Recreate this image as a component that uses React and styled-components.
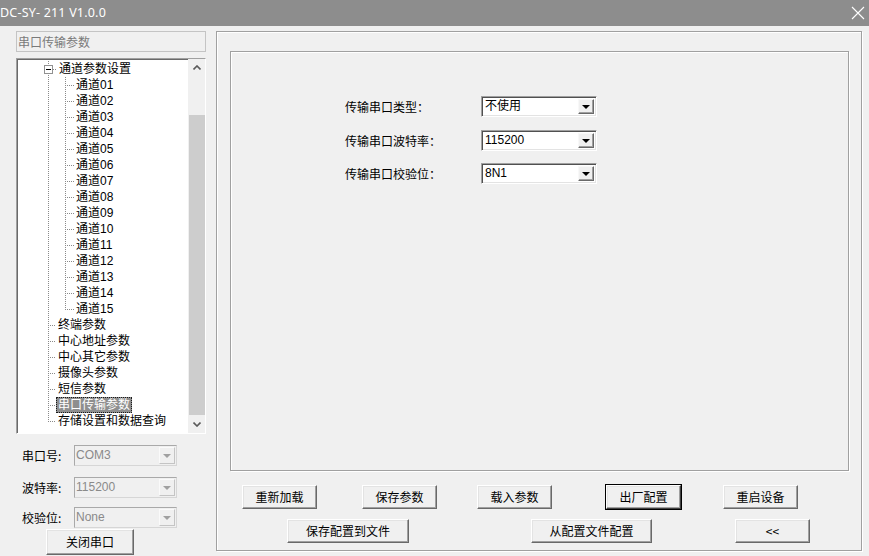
import React from "react";
import styled, { createGlobalStyle, css } from "styled-components";

const GlobalStyle = createGlobalStyle`
  html, body {
    margin: 0;
    padding: 0;
    background: #f0f0f0;
  }
  body {
    font-family: "Liberation Sans", "Noto Sans CJK SC", sans-serif;
    font-size: 12px;
    color: #000;
  }
  * {
    box-sizing: border-box;
  }
`;

const DOT = "#8a8a8a";

const Window = styled.div`
  width: 869px;
  height: 556px;
  display: flex;
  flex-direction: column;
  overflow: hidden;
  background: #f0f0f0;
`;
const TitleBar = styled.div`
  height: 26px;
  flex: none;
  display: flex;
  align-items: center;
  justify-content: space-between;
  padding: 0 4px 1px 0;
  background: #8d8d8d;
  color: #fff;
  font-family: "Noto Sans", sans-serif;
  font-size: 12.5px;
  letter-spacing: 0.2px;
`;
const Body = styled.div`
  flex: 1;
  display: flex;
  min-height: 0;
`;
const LeftPane = styled.div`
  width: 216px;
  flex: none;
  display: flex;
  flex-direction: column;
  padding: 5px 0 0 16px;
`;
const PathField = styled.div`
  width: 190px;
  height: 21px;
  border: 1px solid #c4c4c4;
  background: #f0f0f0;
  color: #7a7a7a;
  padding-left: 1px;
  line-height: 19px;
  font-family: "Noto Sans CJK SC", sans-serif;
`;
const Tree = styled.div`
  margin-top: 6px;
  width: 190px;
  height: 376px;
  display: flex;
  background: #fff;
  border: 1px solid #fff;
  border-top-color: #a0a0a0;
  border-left-color: #a0a0a0;
  box-shadow: inset 1px 1px 0 #6a6a6a;
`;
const TreeList = styled.div`
  flex: 1;
  padding-top: 2px;
  overflow: hidden;
`;
const TreeRow = styled.div`
  height: 16px;
  display: flex;
  align-items: stretch;
`;
const Spacer = styled.div`
  width: ${(p) => p.$w}px;
  flex: none;
`;
const Guide = styled.div`
  width: ${(p) => p.$w}px;
  flex: none;
  display: flex;
  align-items: center;
  background-repeat: no-repeat;
  ${(p) => {
    const layers = [];
    const sizes = [];
    const pos = [];
    if (p.$vert) {
      layers.push(`repeating-linear-gradient(to bottom, ${DOT} 0 1px, transparent 1px 2px)`);
      sizes.push(`1px ${p.$vert === "half" ? "50%" : "100%"}`);
      pos.push(`${p.$vx || 0}px 0`);
    }
    if (p.$horiz) {
      layers.push(`repeating-linear-gradient(to right, ${DOT} 0 1px, transparent 1px 2px)`);
      sizes.push(`${p.$horiz}px 1px`);
      pos.push(`${p.$hx || 0}px 8px`);
    }
    return layers.length
      ? css`
          background-image: ${layers.join(", ")};
          background-size: ${sizes.join(", ")};
          background-position: ${pos.join(", ")};
        `
      : "";
  }}
`;
const ExpandBox = styled.div`
  width: 9px;
  height: 9px;
  border: 1px solid #919191;
  background: #fff;
  display: flex;
  align-items: center;
  justify-content: center;
  &::after {
    content: "";
    width: 5px;
    height: 1px;
    background: #000;
  }
`;
const ItemLabel = styled.span`
  height: 16px;
  line-height: 14px;
  padding: 0 1px;
  border: 1px solid transparent;
  white-space: nowrap;
  font-family: "Liberation Sans", "Noto Sans CJK SC", sans-serif;
  ${(p) =>
    p.$selected &&
    css`
      background: #8e8e8e;
      color: #fff;
      border: 1px dotted #1a1a1a;
    `}
`;
const ScrollBar = styled.div`
  width: 17px;
  flex: none;
  display: flex;
  flex-direction: column;
  background: #f0f0f0;
`;
const ScrollArrow = styled.div`
  height: 17px;
  display: flex;
  align-items: center;
  justify-content: center;
`;
const ScrollTrack = styled.div`
  flex: 1;
  display: flex;
  flex-direction: column;
  padding: 39px 0 1px 1px;
`;
const ScrollThumb = styled.div`
  flex: 1;
  background: #cdcdcd;
`;
const ComboRow = styled.div`
  display: flex;
  align-items: center;
  margin-top: ${(p) => p.$mt}px;
  padding-left: ${(p) => p.$pl || 0}px;
`;
const FieldLabel = styled.div`
  width: ${(p) => p.$w}px;
  flex: none;
  font-family: "Noto Sans CJK SC", sans-serif;
  white-space: nowrap;
`;
const Combo = styled.div`
  width: ${(p) => p.$w}px;
  height: 21px;
  display: flex;
  align-items: stretch;
  border: 1px solid;
  ${(p) =>
    p.$disabled
      ? css`
          border-color: #a9a9a9 #d6d6d6 #d6d6d6 #a9a9a9;
          background: #f0f0f0;
          color: #8a8a8a;
        `
      : css`
          border-color: #a0a0a0 #fff #fff #a0a0a0;
          box-shadow: inset 1px 1px 0 #505050, inset -1px -1px 0 #e3e3e3;
          background: #fff;
          color: #000;
        `}
`;
const ComboText = styled.div`
  flex: 1;
  padding-left: ${(p) => (p.$disabled ? 1 : 3)}px;
  line-height: 19px;
  font-family: "Liberation Sans", "Noto Sans CJK SC", sans-serif;
  overflow: hidden;
  white-space: nowrap;
`;
const ComboButton = styled.div`
  width: 16px;
  margin: ${(p) => (p.$disabled ? "1px" : "2px 2px 2px 0")};
  display: flex;
  align-items: center;
  justify-content: center;
  border: 1px solid;
  ${(p) =>
    p.$disabled
      ? css`
          border-color: #fafafa #c4c4c4 #c4c4c4 #fafafa;
          background: #f0f0f0;
        `
      : css`
          border-color: #f8f8f8 #696969 #696969 #f8f8f8;
          box-shadow: inset -1px -1px 0 #a0a0a0;
          background: #f0f0f0;
        `}
  &::after {
    content: "";
    border-left: 4px solid transparent;
    border-right: 4px solid transparent;
    border-top: 4px solid ${(p) => (p.$disabled ? "#a0a0a0" : "#000")};
    margin-top: 1px;
  }
`;
const Button = styled.div`
  width: ${(p) => p.$w}px;
  height: ${(p) => p.$h || 24}px;
  margin-left: ${(p) => p.$ml || 0}px;
  flex: none;
  display: flex;
  align-items: center;
  justify-content: center;
  background: #f0f0f0;
  border: 1px solid;
  border-color: #fff #696969 #696969 #fff;
  box-shadow: inset -1px -1px 0 #a0a0a0, inset 1px 1px 0 #e3e3e3;
  font-family: "Noto Sans CJK SC", sans-serif;
  font-size: 12px;
  white-space: nowrap;
  padding-bottom: 1px;
  ${(p) =>
    p.$default &&
    css`
      outline: 1px solid #000;
      outline-offset: 0;
      border-color: #fff #404040 #404040 #fff;
    `}
`;
const RightPane = styled.div`
  flex: 1;
  padding: 5px 7px 0 0;
`;
const GroupBox = styled.div`
  height: 520px;
  display: flex;
  flex-direction: column;
  padding: 19px 12px 0 13px;
  border: 1px solid #a0a0a0;
  box-shadow: inset 1px 1px 0 #fff, 1px 1px 0 #fff;
`;
const InnerBox = styled.div`
  height: 420px;
  flex: none;
  border: 1px solid #a0a0a0;
  box-shadow: inset 1px 1px 0 #fff, 1px 1px 0 #fff;
  padding: 44px 0 0 114px;
`;
const ButtonRow = styled.div`
  display: flex;
  margin-top: ${(p) => p.$mt}px;
`;

const channels = Array.from({ length: 15 }, (_, i) => `通道${String(i + 1).padStart(2, "0")}`);
const topItems = ["终端参数", "中心地址参数", "中心其它参数", "摄像头参数", "短信参数", "串口传输参数", "存储设置和数据查询"];

const Chevron = ({ down }) => (
  <svg width="8" height="5" viewBox="0 0 8 5">
    <path d={down ? "M0.5 0.5 L4 4 L7.5 0.5" : "M0.5 4.5 L4 1 L7.5 4.5"} fill="none" stroke="#5a5a5a" strokeWidth="1.6" />
  </svg>
);

const TreeView = () => (
  <Tree>
    <TreeList>
      <TreeRow>
        <Spacer $w={27} />
        <Guide $w={13} $vert="full" $vx={4} $horiz={4} $hx={9}>
          <ExpandBox />
        </Guide>
        <ItemLabel>通道参数设置</ItemLabel>
      </TreeRow>
      {channels.map((c, i) => (
        <TreeRow key={c}>
          <Spacer $w={31} />
          <Guide $w={17} $vert="full" />
          <Guide $w={9} $vert={i === channels.length - 1 ? "half" : "full"} $horiz={9} />
          <ItemLabel>{c}</ItemLabel>
        </TreeRow>
      ))}
      {topItems.map((t, i) => (
        <TreeRow key={t}>
          <Spacer $w={31} />
          <Guide $w={8} $vert={i === topItems.length - 1 ? "half" : "full"} $horiz={8} />
          <ItemLabel $selected={t === "串口传输参数"}>{t}</ItemLabel>
        </TreeRow>
      ))}
    </TreeList>
    <ScrollBar>
      <ScrollArrow>
        <Chevron />
      </ScrollArrow>
      <ScrollTrack>
        <ScrollThumb />
      </ScrollTrack>
      <ScrollArrow>
        <Chevron down />
      </ScrollArrow>
    </ScrollBar>
  </Tree>
);

const SelectBox = ({ value, width, disabled }) => (
  <Combo $w={width} $disabled={disabled}>
    <ComboText $disabled={disabled}>{value}</ComboText>
    <ComboButton $disabled={disabled} />
  </Combo>
);

const portFields = [
  { label: "串口号:", value: "COM3", mt: 11 },
  { label: "波特率:", value: "115200", mt: 11 },
  { label: "校验位:", value: "None", mt: 9 },
];

const serialFields = [
  { label: "传输串口类型：", value: "不使用", mt: 0 },
  { label: "传输串口波特率：", value: "115200", mt: 13 },
  { label: "传输串口校验位：", value: "8N1", mt: 12 },
];

const App = () => {
  return (
    <>
      <GlobalStyle />
      <Window>
        <TitleBar>
          <span>DC-SY- 211 V1.0.0</span>
          <svg width="14" height="14" viewBox="0 0 14 14">
            <path d="M1 1 L13 13 M13 1 L1 13" stroke="#fff" strokeWidth="1.1" />
          </svg>
        </TitleBar>
        <Body>
          <LeftPane>
            <PathField>串口传输参数</PathField>
            <TreeView />
            {portFields.map((f) => (
              <ComboRow key={f.label} $mt={f.mt} $pl={6}>
                <FieldLabel $w={52}>{f.label}</FieldLabel>
                <SelectBox value={f.value} width={103} disabled />
              </ComboRow>
            ))}
            <ComboRow $mt={1} $pl={30}>
              <Button $w={88} $h={26}>关闭串口</Button>
            </ComboRow>
          </LeftPane>
          <RightPane>
            <GroupBox>
              <InnerBox>
                {serialFields.map((f) => (
                  <ComboRow key={f.label} $mt={f.mt}>
                    <FieldLabel $w={136}>{f.label}</FieldLabel>
                    <SelectBox value={f.value} width={116} />
                  </ComboRow>
                ))}
              </InnerBox>
              <ButtonRow $mt={14}>
                <Button $w={75} $ml={12}>重新加载</Button>
                <Button $w={75} $ml={45}>保存参数</Button>
                <Button $w={75} $ml={40}>载入参数</Button>
                <Button $w={75} $ml={54} $default>出厂配置</Button>
                <Button $w={75} $ml={42}>重启设备</Button>
              </ButtonRow>
              <ButtonRow $mt={10}>
                <Button $w={122} $ml={57}>保存配置到文件</Button>
                <Button $w={121} $ml={122}>从配置文件配置</Button>
                <Button $w={75} $ml={83}>&lt;&lt;</Button>
              </ButtonRow>
            </GroupBox>
          </RightPane>
        </Body>
      </Window>
    </>
  );
};

export default App;
